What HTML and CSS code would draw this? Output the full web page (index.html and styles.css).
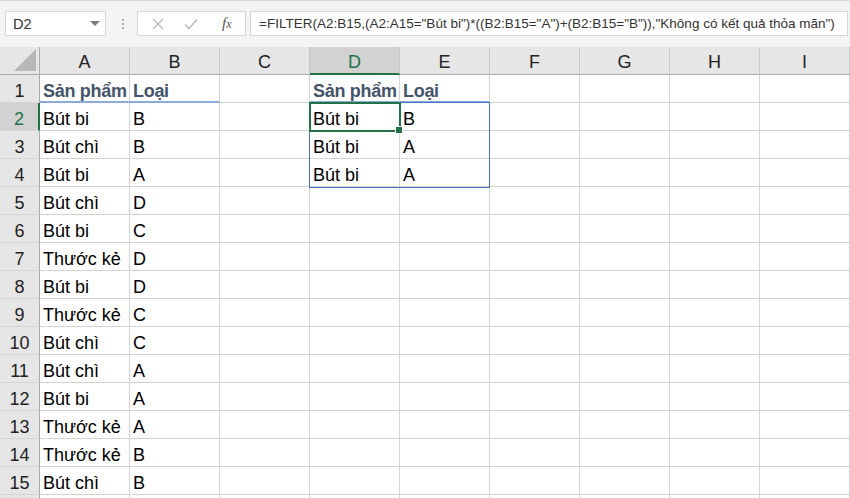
FILE: index.html
```html
<!DOCTYPE html>
<html>
<head>
<meta charset="utf-8">
<link rel="stylesheet" href="styles.css">
</head>
<body>
<div class="app">
  <div class="toolbar">
    <div class="namebox">
      <span class="nb-text">D2</span>
      <svg class="nb-arrow" width="10" height="6" viewBox="0 0 10 6"><path d="M0 0 L10 0 L5 5 Z" fill="#7a7a7a"/></svg>
    </div>
    <div class="grip"><i></i><i></i><i></i></div>
    <div class="fxbox">
      <svg class="ico" width="12" height="12" viewBox="0 0 12 12"><path d="M1 1 L11 11 M11 1 L1 11" stroke="#bdbdbd" stroke-width="1.4" fill="none"/></svg>
      <svg class="ico" width="14" height="12" viewBox="0 0 14 12"><path d="M1 6.5 L5 10.5 L13 1.5" stroke="#bdbdbd" stroke-width="1.6" fill="none"/></svg>
      <span class="fx">f<span class="x">x</span></span>
    </div>
    <div class="formula">=FILTER(A2:B15,(A2:A15="Bút bi")*((B2:B15="A")+(B2:B15="B")),"Không có kết quả thỏa mãn")</div>
  </div>
  <div class="sheet">
    <div class="corner"><svg width="22" height="22" viewBox="0 0 22 22"><path d="M22 0 L22 22 L0 22 Z" fill="#b8b8b8"/></svg></div>
    <div class="ch">A</div><div class="ch">B</div><div class="ch">C</div><div class="ch sel">D</div><div class="ch">E</div><div class="ch">F</div><div class="ch">G</div><div class="ch">H</div><div class="ch">I</div>

    <div class="rh">1</div><div class="c hd">Sản phẩm</div><div class="c hd">Loại</div><div class="c"></div><div class="c hd">Sản phẩm</div><div class="c hd">Loại</div><div class="c"></div><div class="c"></div><div class="c"></div><div class="c"></div>
    <div class="rh sel">2</div><div class="c">Bút bi</div><div class="c">B</div><div class="c"></div><div class="c">Bút bi</div><div class="c">B</div><div class="c"></div><div class="c"></div><div class="c"></div><div class="c"></div>
    <div class="rh">3</div><div class="c">Bút chì</div><div class="c">B</div><div class="c"></div><div class="c">Bút bi</div><div class="c">A</div><div class="c"></div><div class="c"></div><div class="c"></div><div class="c"></div>
    <div class="rh">4</div><div class="c">Bút bi</div><div class="c">A</div><div class="c"></div><div class="c">Bút bi</div><div class="c">A</div><div class="c"></div><div class="c"></div><div class="c"></div><div class="c"></div>
    <div class="rh">5</div><div class="c">Bút chì</div><div class="c">D</div><div class="c"></div><div class="c"></div><div class="c"></div><div class="c"></div><div class="c"></div><div class="c"></div><div class="c"></div>
    <div class="rh">6</div><div class="c">Bút bi</div><div class="c">C</div><div class="c"></div><div class="c"></div><div class="c"></div><div class="c"></div><div class="c"></div><div class="c"></div><div class="c"></div>
    <div class="rh">7</div><div class="c">Thước kẻ</div><div class="c">D</div><div class="c"></div><div class="c"></div><div class="c"></div><div class="c"></div><div class="c"></div><div class="c"></div><div class="c"></div>
    <div class="rh">8</div><div class="c">Bút bi</div><div class="c">D</div><div class="c"></div><div class="c"></div><div class="c"></div><div class="c"></div><div class="c"></div><div class="c"></div><div class="c"></div>
    <div class="rh">9</div><div class="c">Thước kẻ</div><div class="c">C</div><div class="c"></div><div class="c"></div><div class="c"></div><div class="c"></div><div class="c"></div><div class="c"></div><div class="c"></div>
    <div class="rh">10</div><div class="c">Bút chì</div><div class="c">C</div><div class="c"></div><div class="c"></div><div class="c"></div><div class="c"></div><div class="c"></div><div class="c"></div><div class="c"></div>
    <div class="rh">11</div><div class="c">Bút chì</div><div class="c">A</div><div class="c"></div><div class="c"></div><div class="c"></div><div class="c"></div><div class="c"></div><div class="c"></div><div class="c"></div>
    <div class="rh">12</div><div class="c">Bút bi</div><div class="c">A</div><div class="c"></div><div class="c"></div><div class="c"></div><div class="c"></div><div class="c"></div><div class="c"></div><div class="c"></div>
    <div class="rh">13</div><div class="c">Thước kẻ</div><div class="c">A</div><div class="c"></div><div class="c"></div><div class="c"></div><div class="c"></div><div class="c"></div><div class="c"></div><div class="c"></div>
    <div class="rh">14</div><div class="c">Thước kẻ</div><div class="c">B</div><div class="c"></div><div class="c"></div><div class="c"></div><div class="c"></div><div class="c"></div><div class="c"></div><div class="c"></div>
    <div class="rh">15</div><div class="c">Bút chì</div><div class="c">B</div><div class="c"></div><div class="c"></div><div class="c"></div><div class="c"></div><div class="c"></div><div class="c"></div><div class="c"></div>
    <div class="rh"></div><div class="c"></div><div class="c"></div><div class="c"></div><div class="c"></div><div class="c"></div><div class="c"></div><div class="c"></div><div class="c"></div><div class="c"></div>

    <div class="spill"></div>
    <div class="selection"><span class="handle"></span></div>
  </div>
</div>
</body>
</html>
```

FILE: styles.css
```css
html, body {
  margin: 0;
  padding: 0;
  background: #ffffff;
}
.app {
  width: 850px;
  height: 498px;
  overflow: hidden;
  font-family: "Liberation Sans", Arial, sans-serif;
}
.toolbar {
  height: 47px;
  box-sizing: border-box;
  background: #f3f3f3;
  border-top: 1px solid #dcdcdc;
  display: flex;
  align-items: flex-start;
  padding: 10px 0 0 5px;
}
.namebox {
  width: 101px;
  height: 25px;
  box-sizing: border-box;
  background: #fff;
  border: 1px solid #d6d6d6;
  display: flex;
  align-items: center;
  justify-content: space-between;
  padding: 0 5px 0 7px;
}
.nb-text {
  font-size: 14.5px;
  color: #333;
}
.grip {
  width: 31px;
  height: 25px;
  display: flex;
  flex-direction: column;
  align-items: center;
  justify-content: center;
  gap: 2px;
  padding-left: 2px;
  box-sizing: border-box;
}
.grip i {
  display: block;
  width: 2px;
  height: 2px;
  background: #b0b0b0;
}
.fxbox {
  width: 109px;
  height: 25px;
  box-sizing: border-box;
  background: #fff;
  border: 1px solid #d6d6d6;
  display: flex;
  align-items: center;
  padding: 0 0 0 14px;
  gap: 20px;
}
.fx {
  font-family: "Liberation Serif", "DejaVu Serif", serif;
  font-style: italic;
  font-size: 15px;
  color: #555;
  margin-left: 4px;
}
.fx .x {
  font-size: 12px;
}
.formula {
  margin-left: 4px;
  width: 598px;
  height: 25px;
  box-sizing: border-box;
  background: #fff;
  border: 1px solid #d6d6d6;
  font-size: 13.5px;
  line-height: 23px;
  color: #333;
  padding-left: 8px;
  white-space: nowrap;
  overflow: hidden;
}
.sheet {
  position: relative;
  display: grid;
  grid-template-columns: 40px repeat(9, 90px);
  grid-auto-rows: 28px;
  font-size: 18px;
  line-height: 28px;
}
.corner {
  background: #e6e6e6;
  box-sizing: border-box;
  border-right: 1px solid #ababab;
  border-bottom: 1px solid #ababab;
  display: flex;
  align-items: flex-end;
  justify-content: flex-end;
  padding: 0 3px 3px 0;
}
.ch {
  background: #e6e6e6;
  box-sizing: border-box;
  border-right: 1px solid #c8c8c8;
  border-bottom: 1px solid #ababab;
  text-align: center;
  color: #222;
  padding-top: 1px;
}
.ch.sel {
  background: #d2d2d2;
  color: #217346;
  border-bottom: 2px solid #217346;
}
.rh {
  background: #e6e6e6;
  box-sizing: border-box;
  border-right: 1px solid #ababab;
  border-bottom: 1px solid #d4d4d4;
  text-align: center;
  color: #222;
  padding-top: 2px;
}
.rh.sel {
  background: #d2d2d2;
  color: #217346;
  border-right: 2px solid #217346;
}
.c {
  box-sizing: border-box;
  border-right: 1px solid #d4d4d4;
  border-bottom: 1px solid #d4d4d4;
  padding: 2px 0 0 3px;
  white-space: nowrap;
  color: #000;
}
.c.hd {
  font-weight: bold;
  color: #44546a;
  letter-spacing: -0.3px;
  border-bottom: 2px solid #8eaadb;
}
.spill {
  position: absolute;
  left: 309px;
  top: 55px;
  width: 181px;
  height: 86px;
  box-sizing: border-box;
  border: 1px solid #4472c4;
  pointer-events: none;
}
.selection {
  position: absolute;
  left: 309px;
  top: 55px;
  width: 92px;
  height: 30px;
  box-sizing: border-box;
  border: 2px solid #217346;
}
.handle {
  position: absolute;
  right: -4px;
  bottom: -4px;
  width: 6px;
  height: 6px;
  background: #217346;
  border: 1px solid #fff;
}
```
